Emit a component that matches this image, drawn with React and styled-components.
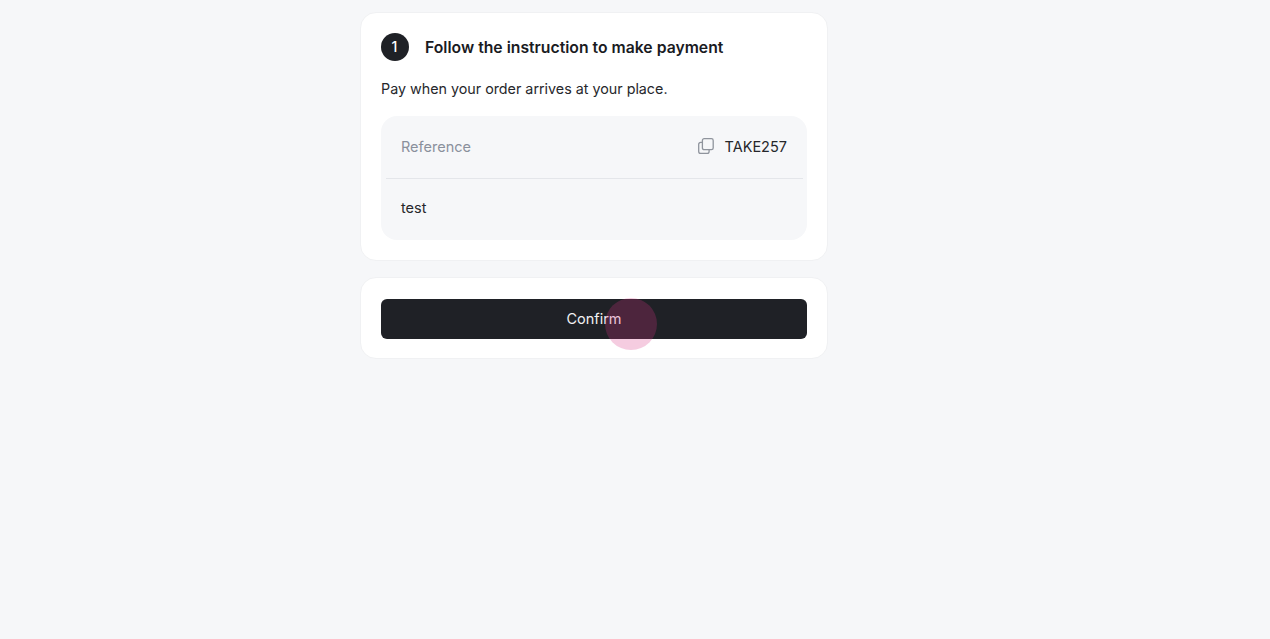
import React from "react";
import styled, { createGlobalStyle } from "styled-components";

const GlobalStyle = createGlobalStyle`
  html, body {
    margin: 0;
    padding: 0;
    height: 100%;
    overflow: hidden;
    background: #f6f7f9;
  }
  body {
    font-family: Inter, "Liberation Sans", sans-serif;
    color: #1f2024;
  }
`;

const Page = styled.main`
  width: 468px;
  margin-left: 360px;
  padding-top: 12px;
  display: flex;
  flex-direction: column;
  gap: 16px;
`;

const Card = styled.section`
  background: #fff;
  border: 1px solid #f0f1f3;
  border-radius: 16px;
  padding: ${props => props.$padding};
`;

const StepHeader = styled.div`
  display: flex;
  align-items: center;
  gap: 16px;
  height: 29px;
`;

const StepNumber = styled.span`
  width: 28px;
  height: 28px;
  padding-right: 1px;
  box-sizing: border-box;
  border-radius: 50%;
  background: #1f2126;
  color: #fff;
  font-size: 14px;
  font-weight: 500;
  display: flex;
  align-items: center;
  justify-content: center;
`;

const StepTitle = styled.h2`
  margin: 0;
  padding-top: 2px;
  font-size: 15.75px;
  line-height: 20px;
  font-weight: 600;
  color: #1a1b1f;
`;

const Instruction = styled.p`
  margin: 18px 0 17px;
  font-size: 14.3px;
  line-height: 20px;
  color: #26272b;
`;

const Details = styled.div`
  background: #f6f7f9;
  border-radius: 16px;
  padding: 0 4px 0 5px;
  height: 124px;
`;

const Row = styled.div`
  display: flex;
  align-items: center;
  justify-content: space-between;
  padding: 0 16px 2px 15px;
  height: ${props => props.$height}px;
  border-bottom: ${props => (props.$divided ? "1px solid #e4e6ea" : "none")};
  box-sizing: border-box;
`;

const Label = styled.span`
  font-size: 14.5px;
  color: #8a909c;
`;

const Value = styled.span`
  font-size: 14.5px;
  color: #26272b;
`;

const ReferenceValue = styled.div`
  display: flex;
  align-items: center;
  gap: 11px;
`;

const CopyIcon = styled.svg`
  width: 16px;
  height: 16px;
  color: #8f949d;
  display: block;
`;

const ConfirmWrap = styled.div`
  position: relative;
`;

const ConfirmButton = styled.button`
  display: block;
  width: 100%;
  height: 40px;
  border: none;
  border-radius: 6px;
  background: #1f2126;
  color: #f1f1f3;
  font-family: inherit;
  font-size: 14.5px;
  font-weight: 400;
  cursor: pointer;
`;

const CursorHalo = styled.span`
  position: absolute;
  left: 224px;
  top: -0.5px;
  width: 52px;
  height: 52px;
  border-radius: 50%;
  background: rgba(214, 51, 132, 0.25);
  pointer-events: none;
`;

const App = () => (
  <>
    <GlobalStyle />
    <Page>
      <Card $padding="19px 20px 20px">
        <StepHeader>
          <StepNumber>1</StepNumber>
          <StepTitle>Follow the instruction to make payment</StepTitle>
        </StepHeader>
        <Instruction>Pay when your order arrives at your place.</Instruction>
        <Details>
          <Row $height={63} $divided>
            <Label>Reference</Label>
            <ReferenceValue>
              <CopyIcon viewBox="0 0 16 16" fill="none" stroke="currentColor" strokeWidth="1.3">
                <rect x="4.4" y="0.7" width="10.8" height="11" rx="1.8" />
                <path d="M4.4 4.4H2.6A1.9 1.9 0 0 0 .7 6.3v7.1a1.9 1.9 0 0 0 1.9 1.9h6.6a1.9 1.9 0 0 0 1.9-1.9v-1.7" />
              </CopyIcon>
              <Value>TAKE257</Value>
            </ReferenceValue>
          </Row>
          <Row $height={58}>
            <Value>test</Value>
          </Row>
        </Details>
      </Card>
      <Card $padding="20.5px 20px 19px">
        <ConfirmWrap>
          <ConfirmButton>Confirm</ConfirmButton>
          <CursorHalo />
        </ConfirmWrap>
      </Card>
    </Page>
  </>
);

export default App;
